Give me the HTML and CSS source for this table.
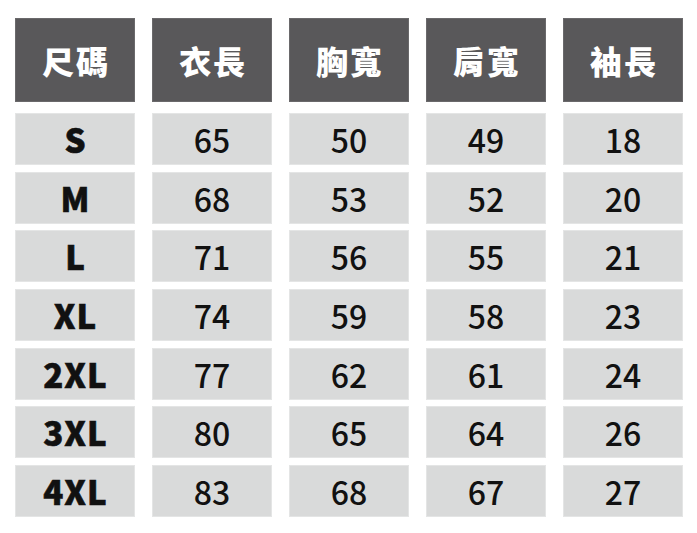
FILE: index.html
```html
<!DOCTYPE html>
<html lang="zh-Hant">
<head>
<meta charset="utf-8">
<link rel="stylesheet" href="styles.css">
</head>
<body>
<div class="chart">
  <div class="row head">
    <div class="cell">尺碼</div>
    <div class="cell">衣長</div>
    <div class="cell">胸寬</div>
    <div class="cell">肩寬</div>
    <div class="cell">袖長</div>
  </div>
  <div class="body">
    <div class="row"><div class="cell size">S</div><div class="cell">65</div><div class="cell">50</div><div class="cell">49</div><div class="cell">18</div></div>
    <div class="row"><div class="cell size">M</div><div class="cell">68</div><div class="cell">53</div><div class="cell">52</div><div class="cell">20</div></div>
    <div class="row"><div class="cell size">L</div><div class="cell">71</div><div class="cell">56</div><div class="cell">55</div><div class="cell">21</div></div>
    <div class="row"><div class="cell size">XL</div><div class="cell">74</div><div class="cell">59</div><div class="cell">58</div><div class="cell">23</div></div>
    <div class="row"><div class="cell size">2XL</div><div class="cell">77</div><div class="cell">62</div><div class="cell">61</div><div class="cell">24</div></div>
    <div class="row"><div class="cell size">3XL</div><div class="cell">80</div><div class="cell">65</div><div class="cell">64</div><div class="cell">26</div></div>
    <div class="row"><div class="cell size">4XL</div><div class="cell">83</div><div class="cell">68</div><div class="cell">67</div><div class="cell">27</div></div>
  </div>
</div>
</body>
</html>
```

FILE: styles.css
```css
html, body {
  margin: 0;
  padding: 0;
  background: #ffffff;
}
.chart {
  padding: 18px 14px 0 15px;
  font-family: "Noto Sans CJK TC", "Noto Sans", sans-serif;
}
.row {
  display: grid;
  grid-template-columns: repeat(5, 120px);
  column-gap: 17px;
}
.cell {
  display: flex;
  align-items: center;
  justify-content: center;
  box-sizing: border-box;
  height: 52px;
  background: #d9dada;
  border: 1px solid #e4e5e5;
  color: #111111;
  font-size: 32px;
  font-weight: 500;
}
.head .cell {
  height: 84px;
  background: #59585a;
  border: 1px solid #6a696b;
  color: #ffffff;
  font-size: 32px;
  font-weight: 900;
  letter-spacing: 2px;
  padding-left: 2px;
}
.body {
  margin-top: 11px;
  display: grid;
  row-gap: 6.67px;
}
.cell.size {
  font-size: 33px;
  font-weight: 900;
  letter-spacing: 1px;
  padding-left: 1px;
  -webkit-text-stroke: 0.6px #111111;
}
```
